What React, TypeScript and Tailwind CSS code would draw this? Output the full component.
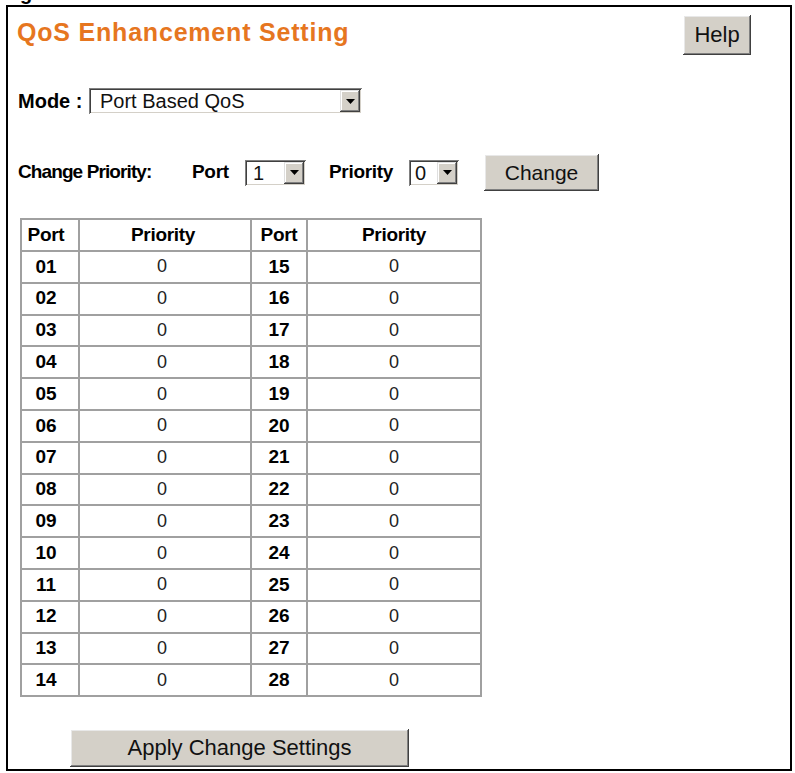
import React from "react";

const rows = Array.from({ length: 14 }, (_, i) => i + 1);

function Arrow() {
  return (
    <div className="flex h-full w-[20px] items-center justify-center bg-[#d4d0c8] shadow-[inset_-1px_-1px_#404040,inset_1px_1px_#dfdfdf,inset_-2px_-2px_#808080,inset_2px_2px_#ffffff]">
      <svg width="9" height="5" viewBox="0 0 9 5">
        <polygon points="0,0 9,0 4.5,5" fill="#000" />
      </svg>
    </div>
  );
}

export default function App() {
  return (
    <div className="bg-white font-['Liberation_Sans',Arial,sans-serif] text-black w-[795px] h-[773px] pl-[6px]">
      <div className="h-[5px] overflow-hidden pl-[14px]">
        <div className="-mt-[17px] text-[20px] font-bold leading-[20px]">g</div>
      </div>
      <div className="w-[786px] h-[766px] border-2 border-black flex flex-col">
        {/* header */}
        <div className="flex items-start justify-between h-[48px]">
          <div className="mt-[11px] ml-[9px] text-[25px] leading-[28px] font-bold tracking-[0.8px] text-[#e6761f]">
            QoS Enhancement Setting
          </div>
          <button className="mt-[8px] mr-[39px] w-[68px] h-[40px] bg-[#d4d0c8] text-[22px] leading-none text-[#111] shadow-[inset_-1px_-1px_#404040,inset_1px_1px_#ffffff,inset_-2px_-2px_#808080,inset_2px_2px_#e8e8e8]">
            Help
          </button>
        </div>

        {/* mode row */}
        <div className="mt-[33px] ml-[10px] flex items-center h-[26px]">
          <span className="text-[20px] font-bold w-[71px]">Mode :</span>
          <div className="flex h-[26px] w-[273px] bg-white shadow-[inset_1px_1px_#808080,inset_-1px_-1px_#ffffff,inset_2px_2px_#404040,inset_-2px_-2px_#d4d0c8] p-[2px]">
            <div className="flex-1 pl-[9px] text-[20px] leading-[22px] text-[#111]">Port Based QoS</div>
            <Arrow />
          </div>
        </div>

        {/* change priority row */}
        <div className="mt-[41px] ml-[10px] flex items-center h-[35px]">
          <span className="text-[19px] font-bold tracking-[-0.9px] w-[174px]">Change Priority:</span>
          <span className="text-[19px] font-bold tracking-[-0.3px] w-[53px]">Port</span>
          <div className="flex h-[26px] w-[61px] bg-white shadow-[inset_1px_1px_#808080,inset_-1px_-1px_#ffffff,inset_2px_2px_#404040,inset_-2px_-2px_#d4d0c8] p-[2px]">
            <div className="flex-1 pl-[6px] text-[20px] leading-[22px] text-[#111]">1</div>
            <Arrow />
          </div>
          <span className="ml-[23px] text-[19px] font-bold tracking-[-0.3px] w-[80px]">Priority</span>
          <div className="flex h-[26px] w-[50px] bg-white shadow-[inset_1px_1px_#808080,inset_-1px_-1px_#ffffff,inset_2px_2px_#404040,inset_-2px_-2px_#d4d0c8] p-[2px]">
            <div className="flex-1 pl-[4px] text-[20px] leading-[22px] text-[#111]">0</div>
            <Arrow />
          </div>
          <button className="ml-[25px] w-[115px] h-[37px] bg-[#d4d0c8] text-[21px] leading-none text-[#111] shadow-[inset_-1px_-1px_#404040,inset_1px_1px_#ffffff,inset_-2px_-2px_#808080,inset_2px_2px_#e8e8e8]">
            Change
          </button>
        </div>

        {/* table */}
        <div className="mt-[28px] ml-[12px]">
          <table className="border-collapse border-2 border-[#a0a0a0] w-[460px] table-fixed">
            <colgroup>
              <col className="w-[58px]" />
              <col className="w-[172px]" />
              <col className="w-[56px]" />
              <col className="w-[174px]" />
            </colgroup>
            <thead>
              <tr className="h-[32px]">
                <th className="border-2 border-[#a0a0a0] pr-[8px] text-[19px] font-bold tracking-[-0.3px] text-center">Port</th>
                <th className="border-2 border-[#a0a0a0] pr-[4px] text-[19px] font-bold tracking-[-0.3px] text-center">Priority</th>
                <th className="border-2 border-[#a0a0a0] text-[19px] font-bold tracking-[-0.3px] text-center">Port</th>
                <th className="border-2 border-[#a0a0a0] text-[19px] font-bold tracking-[-0.3px] text-center">Priority</th>
              </tr>
            </thead>
            <tbody>
              {rows.map((r) => (
                <tr key={r} className="h-[31.8px]">
                  <td className="border-2 border-[#a0a0a0] pr-[8px] text-[19px] font-bold text-center">
                    {String(r).padStart(2, "0")}
                  </td>
                  <td className="border-2 border-[#a0a0a0] pr-[6px] text-[18px] text-center text-[#222]">0</td>
                  <td className="border-2 border-[#a0a0a0] text-[19px] font-bold text-center">
                    {String(r + 14).padStart(2, "0")}
                  </td>
                  <td className="border-2 border-[#a0a0a0] text-[18px] text-center text-[#222]">0</td>
                </tr>
              ))}
            </tbody>
          </table>
        </div>

        {/* apply */}
        <div className="mt-[32px] ml-[62px]">
          <button className="w-[339px] h-[38px] bg-[#d4d0c8] text-[22px] leading-none text-[#111] shadow-[inset_-1px_-1px_#404040,inset_1px_1px_#ffffff,inset_-2px_-2px_#808080,inset_2px_2px_#e8e8e8]">
            Apply Change Settings
          </button>
        </div>
      </div>
    </div>
  );
}
